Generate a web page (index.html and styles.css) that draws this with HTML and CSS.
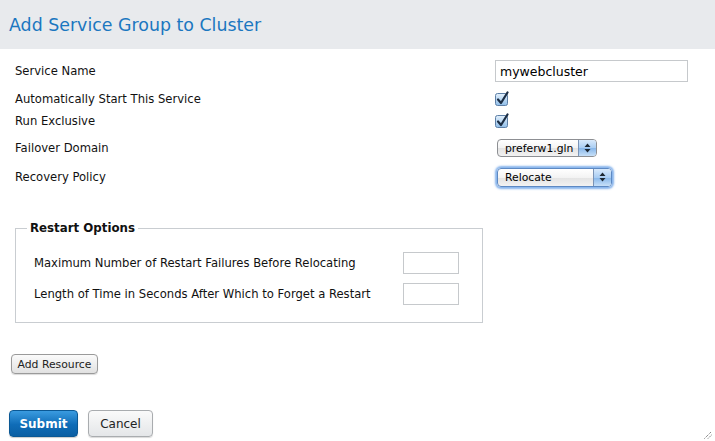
FILE: index.html
```html
<!DOCTYPE html>
<html>
<head>
<meta charset="utf-8">
<link rel="stylesheet" href="styles.css">
</head>
<body>
<div class="header"><h1 class="title">Add Service Group to Cluster</h1></div>
<form class="form">
  <div class="row row-name">
    <span class="label">Service Name</span>
    <span class="text-input wide">mywebcluster</span>
  </div>
  <div class="row row-auto">
    <span class="label">Automatically Start This Service</span>
    <span class="checkbox"><svg width="16" height="16" viewBox="0 0 16 16"><rect x="0.5" y="2.5" width="12" height="12" rx="2" fill="url(#cbg)" stroke="#5d7fa6"/><path d="M3 8.5 L6 12 L12.5 1.5" fill="none" stroke="#1b2d44" stroke-width="2.2" stroke-linecap="round" stroke-linejoin="round"/><defs><linearGradient id="cbg" x1="0" y1="0" x2="0" y2="1"><stop offset="0" stop-color="#e4f1fc"/><stop offset="1" stop-color="#8fbde9"/></linearGradient></defs></svg></span>
  </div>
  <div class="row row-excl">
    <span class="label">Run Exclusive</span>
    <span class="checkbox"><svg width="16" height="16" viewBox="0 0 16 16"><rect x="0.5" y="2.5" width="12" height="12" rx="2" fill="url(#cbg)" stroke="#5d7fa6"/><path d="M3 8.5 L6 12 L12.5 1.5" fill="none" stroke="#1b2d44" stroke-width="2.2" stroke-linecap="round" stroke-linejoin="round"/></svg></span>
  </div>
  <div class="row row-domain">
    <span class="label">Failover Domain</span>
    <span class="select sel-domain">
      <span class="select-text">preferw1.gln</span>
      <span class="select-arrows"><svg width="7" height="10" viewBox="0 0 7 10"><path d="M3.5 0.5 L6.5 4 L0.5 4 Z M0.5 6 L6.5 6 L3.5 9.5 Z" fill="#1d2833"/></svg></span>
    </span>
  </div>
  <div class="row row-policy">
    <span class="label">Recovery Policy</span>
    <span class="select sel-policy focused">
      <span class="select-text">Relocate</span>
      <span class="select-arrows"><svg width="7" height="10" viewBox="0 0 7 10"><path d="M3.5 0.5 L6.5 4 L0.5 4 Z M0.5 6 L6.5 6 L3.5 9.5 Z" fill="#1d2833"/></svg></span>
    </span>
  </div>

  <fieldset class="options">
    <legend class="legend">Restart Options</legend>
    <div class="opt-row">
      <span class="label">Maximum Number of Restart Failures Before Relocating</span>
      <span class="text-input small"></span>
    </div>
    <div class="opt-row second">
      <span class="label">Length of Time in Seconds After Which to Forget a Restart</span>
      <span class="text-input small"></span>
    </div>
  </fieldset>

  <div class="add-row"><button type="button" class="btn-small">Add Resource</button></div>

  <div class="actions">
    <button type="button" class="btn-primary">Submit</button>
    <button type="button" class="btn-secondary">Cancel</button>
  </div>
</form>
<span class="grip"><svg width="8" height="8" viewBox="0 0 8 8"><path d="M0.5 7.5 L7.5 0.5 M4 7.5 L7.5 4" stroke="#555" stroke-width="1" stroke-dasharray="1 1"/></svg></span>
</body>
</html>
```
FILE: styles.css
```css
html, body {
  margin: 0;
  padding: 0;
  background: #ffffff;
}
body {
  width: 715px;
  height: 441px;
  overflow: hidden;
  position: relative;
  font-family: "DejaVu Sans", "Liberation Sans", sans-serif;
  font-size: 11.6px;
  color: #111;
}
.header {
  height: 49px;
  background: #e8eaed;
  display: flex;
  align-items: center;
  padding-left: 9px;
}
.title {
  margin: 0;
  font-weight: normal;
  font-size: 17.4px;
  color: #1b77c0;
}
.form {
  padding-top: 11px;
}
.row {
  display: flex;
  align-items: center;
  padding-left: 15px;
}
.row .label {
  width: 480px;
  flex: none;
}
.row-name { height: 22px; }
.row-auto { height: 22px; margin-top: 6px; }
.row-excl { height: 22px; }
.row-domain { height: 24px; margin-top: 4px; }
.row-policy { height: 24px; margin-top: 5px; }

.text-input {
  box-sizing: border-box;
  height: 22px;
  border: 1px solid #c6c9cc;
  background: #fff;
  display: inline-flex;
  align-items: center;
  padding-left: 4px;
  font-size: 12.5px;
  color: #000;
}
.text-input.wide { width: 193px; }
.text-input.small { width: 56px; }

.checkbox {
  display: inline-flex;
  width: 16px;
  height: 16px;
}

.select {
  box-sizing: border-box;
  display: inline-flex;
  align-items: stretch;
  height: 18px;
  border: 1px solid #8d8f93;
  border-radius: 4px;
  overflow: hidden;
  background: linear-gradient(#ffffff, #f3f3f3 50%, #e3e3e3 51%, #f2f2f2);
  margin-left: 2px;
}
.sel-domain { width: 100px; }
.sel-policy { width: 115px; height: 19px; }
.select.focused {
  box-shadow: 0 0 2px 2px rgba(95, 155, 230, 0.75);
  border-color: #5d89c3;
}
.select-text {
  flex: 1;
  padding-left: 7px;
  display: flex;
  align-items: center;
  font-size: 10.8px;
  color: #000;
}
.select-arrows {
  width: 17px;
  display: flex;
  align-items: center;
  justify-content: center;
  border-left: 1px solid #7b93b5;
  background: linear-gradient(#d8e9fb, #a9cdf3 50%, #86b6ea 51%, #c7e0f8);
}

.options {
  margin: 32px 232px 0 15px;
  padding: 0 23px 17px 11px;
  border: 1px solid #c9cdd1;
  min-width: 0;
}
.legend {
  padding: 0 3px;
  font-weight: bold;
  font-size: 11.8px;
  color: #111;
}
.opt-row {
  display: flex;
  align-items: center;
  justify-content: space-between;
  padding-left: 7px;
  height: 22px;
  margin-top: 17px;
}
.opt-row.second { margin-top: 9px; }

.add-row {
  padding-left: 11px;
  margin-top: 31px;
}
.btn-small {
  box-sizing: border-box;
  width: 87px;
  height: 20px;
  border: 1px solid #9a9a9a;
  border-radius: 4px;
  background: linear-gradient(#fbfbfb, #e1e1e1);
  font-family: "DejaVu Sans", "Liberation Sans", sans-serif;
  font-size: 10.8px;
  color: #222;
  padding: 0;
  box-shadow: 0 1px 1px rgba(0,0,0,0.15);
}

.actions {
  display: flex;
  gap: 10px;
  padding-left: 9px;
  margin-top: 36px;
}
.btn-primary {
  box-sizing: border-box;
  width: 69px;
  height: 27px;
  border: 1px solid #0b5894;
  border-radius: 4px;
  background: linear-gradient(#3a9be0, #0f6cb7 55%, #0b5fa3);
  color: #fff;
  font-family: "DejaVu Sans", "Liberation Sans", sans-serif;
  font-weight: bold;
  font-size: 12px;
  padding: 0;
  box-shadow: 0 1px 1px rgba(0,0,0,0.2);
}
.btn-secondary {
  box-sizing: border-box;
  width: 65px;
  height: 27px;
  border: 1px solid #a9acaf;
  border-radius: 4px;
  background: linear-gradient(#fafafa, #e4e6e8);
  color: #222;
  font-family: "DejaVu Sans", "Liberation Sans", sans-serif;
  font-size: 12px;
  padding: 0;
  box-shadow: 0 1px 1px rgba(0,0,0,0.15);
}
.grip {
  position: absolute;
  right: 3px;
  bottom: 2px;
  width: 8px;
  height: 8px;
  display: block;
}
.grip svg { display: block; }
```
